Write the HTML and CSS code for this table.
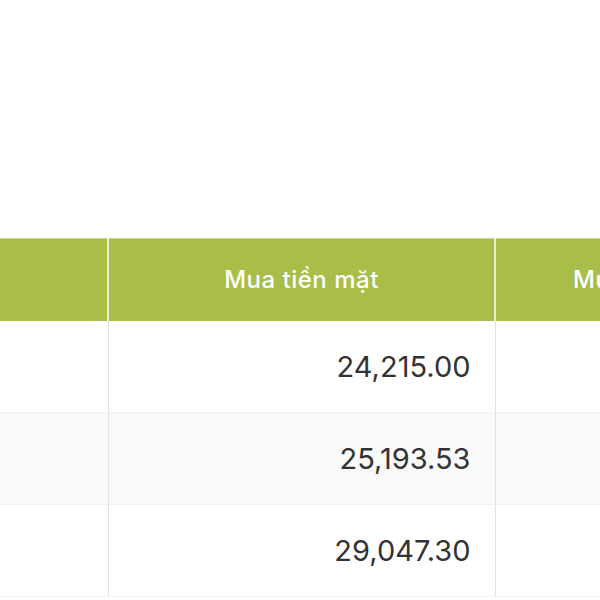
FILE: index.html
```html
<!DOCTYPE html>
<html lang="vi">
<head>
<meta charset="utf-8">
<link rel="stylesheet" href="styles.css">
</head>
<body>
<div class="page">
  <table class="rates">
    <thead>
      <tr>
        <th class="c1"></th>
        <th class="c2">Mua tiền mặt</th>
        <th class="c3">Mua chuyển khoản</th>
      </tr>
    </thead>
    <tbody>
      <tr><td class="c1"></td><td class="num">24,215.00</td><td></td></tr>
      <tr class="alt"><td class="c1"></td><td class="num">25,193.53</td><td></td></tr>
      <tr><td class="c1"></td><td class="num">29,047.30</td><td></td></tr>
    </tbody>
  </table>
</div>
</body>
</html>
```
FILE: styles.css
```css
html, body {
  margin: 0;
  padding: 0;
  background: #ffffff;
  overflow: hidden;
}
.page {
  width: 600px;
  height: 600px;
  overflow: hidden;
  padding-top: 238px;
  box-sizing: border-box;
}
.rates {
  border-collapse: collapse;
  table-layout: fixed;
  width: 900px;
  font-family: Inter, "Noto Sans", sans-serif;
  color: #333333;
}
.rates th {
  background: #a9bd49;
  color: #ffffff;
  font-weight: 500;
  font-size: 24px;
  letter-spacing: 0.5px;
  height: 80px;
  padding: 0 0 2px 0;
  text-align: center;
  border-left: 2px solid #e8eed2;
  border-right: 2px solid #e8eed2;
  border-top: 1px solid #c9d68e;
}
.rates th.c1 { border-left: none; }
.rates .c1 { width: 107px; }
.rates .c2 { width: 385px; }
.rates .c3 { width: 404px; text-align: left; padding-left: 77px; }
.rates td {
  height: 91px;
  padding: 0 24px 0 0;
  font-size: 29px;
  border-left: 1px solid #e2e2e2;
  border-right: 1px solid #e2e2e2;
  border-bottom: 1px solid #f1f1f1;
}
.rates td.c1 { border-left: none; }
.rates td.num { text-align: right; }
.rates tr.alt td { background: #f9f9f9; }
```
